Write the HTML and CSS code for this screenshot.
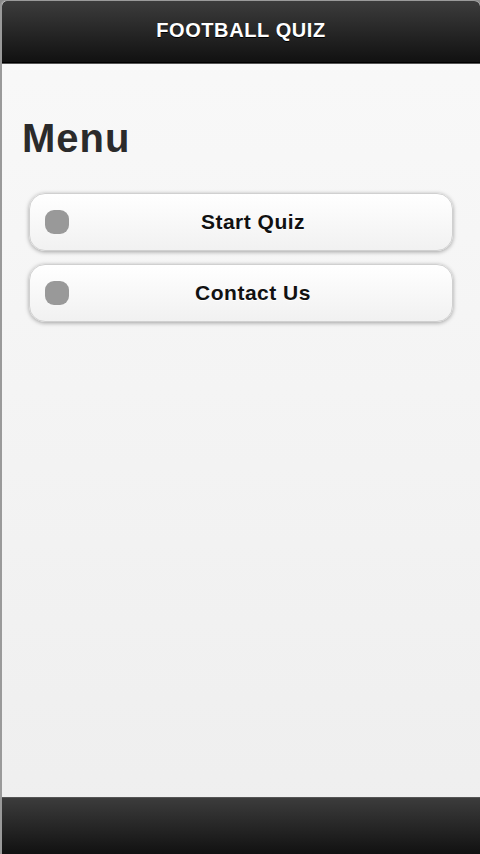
FILE: index.html
```html
<!DOCTYPE html>
<html>
<head>
<meta charset="utf-8">
<link rel="stylesheet" href="styles.css">
</head>
<body>
<div class="page">
  <header class="header"><h1 class="title">FOOTBALL QUIZ</h1></header>
  <main class="content">
    <h2 class="menu-title">Menu</h2>
    <div class="menu">
      <a class="btn"><span class="btn-icon"></span><span class="btn-text">Start Quiz</span></a>
      <a class="btn"><span class="btn-icon"></span><span class="btn-text">Contact Us</span></a>
    </div>
  </main>
  <footer class="footer"></footer>
</div>
</body>
</html>
```
FILE: styles.css
```css
html, body {
  margin: 0;
  padding: 0;
  height: 100%;
  background: #8a8a8a;
}
body {
  font-family: "Liberation Sans", Arial, sans-serif;
}
.page {
  height: 854px;
  display: flex;
  flex-direction: column;
  box-sizing: border-box;
  border-left: 2px solid #9a9a9a;
  border-top: 1px solid #9a9a9a;
  border-radius: 6px 6px 0 0;
  overflow: hidden;
  background: linear-gradient(#f9f9f9, #eeeeee);
}
.header {
  height: 61px;
  flex: none;
  background: linear-gradient(#3c3c3c, #111111);
  border-bottom: 1px solid #000;
  box-shadow: 0 1px 0 #555;
  display: flex;
  align-items: center;
  justify-content: center;
  border-radius: 5px 5px 0 0;
}
.title {
  margin: 0;
  color: #fff;
  font-size: 20px;
  font-weight: bold;
  letter-spacing: 0.6px;
  text-shadow: 0 1px 0 #000;
  padding-bottom: 2px;
}
.content {
  flex: 1;
  padding: 0 27px 0 20px;
}
.menu-title {
  margin: 52px 0 32px 0;
  font-size: 40px;
  font-weight: bold;
  letter-spacing: 1px;
  color: #2b2b2b;
  line-height: 46px;
}
.menu {
  display: flex;
  flex-direction: column;
  gap: 13px;
  padding-left: 7px;
}
.btn {
  height: 56px;
  display: flex;
  align-items: center;
  border: 1px solid #d0d0d0;
  border-radius: 16px;
  background: linear-gradient(#ffffff, #f1f1f1);
  box-shadow: 0 1px 4px rgba(0,0,0,0.35);
  padding: 0 15px;
  color: #111;
}
.btn-icon {
  width: 24px;
  height: 24px;
  border-radius: 9px;
  background: #999999;
  flex: none;
}
.btn-text {
  flex: 1;
  text-align: center;
  font-size: 21px;
  font-weight: bold;
  letter-spacing: 0.5px;
  text-shadow: 0 1px 0 #fff;
}
.footer {
  height: 56px;
  flex: none;
  background: linear-gradient(#3c3c3c, #111111);
  border-top: 1px solid #555;
}
```
